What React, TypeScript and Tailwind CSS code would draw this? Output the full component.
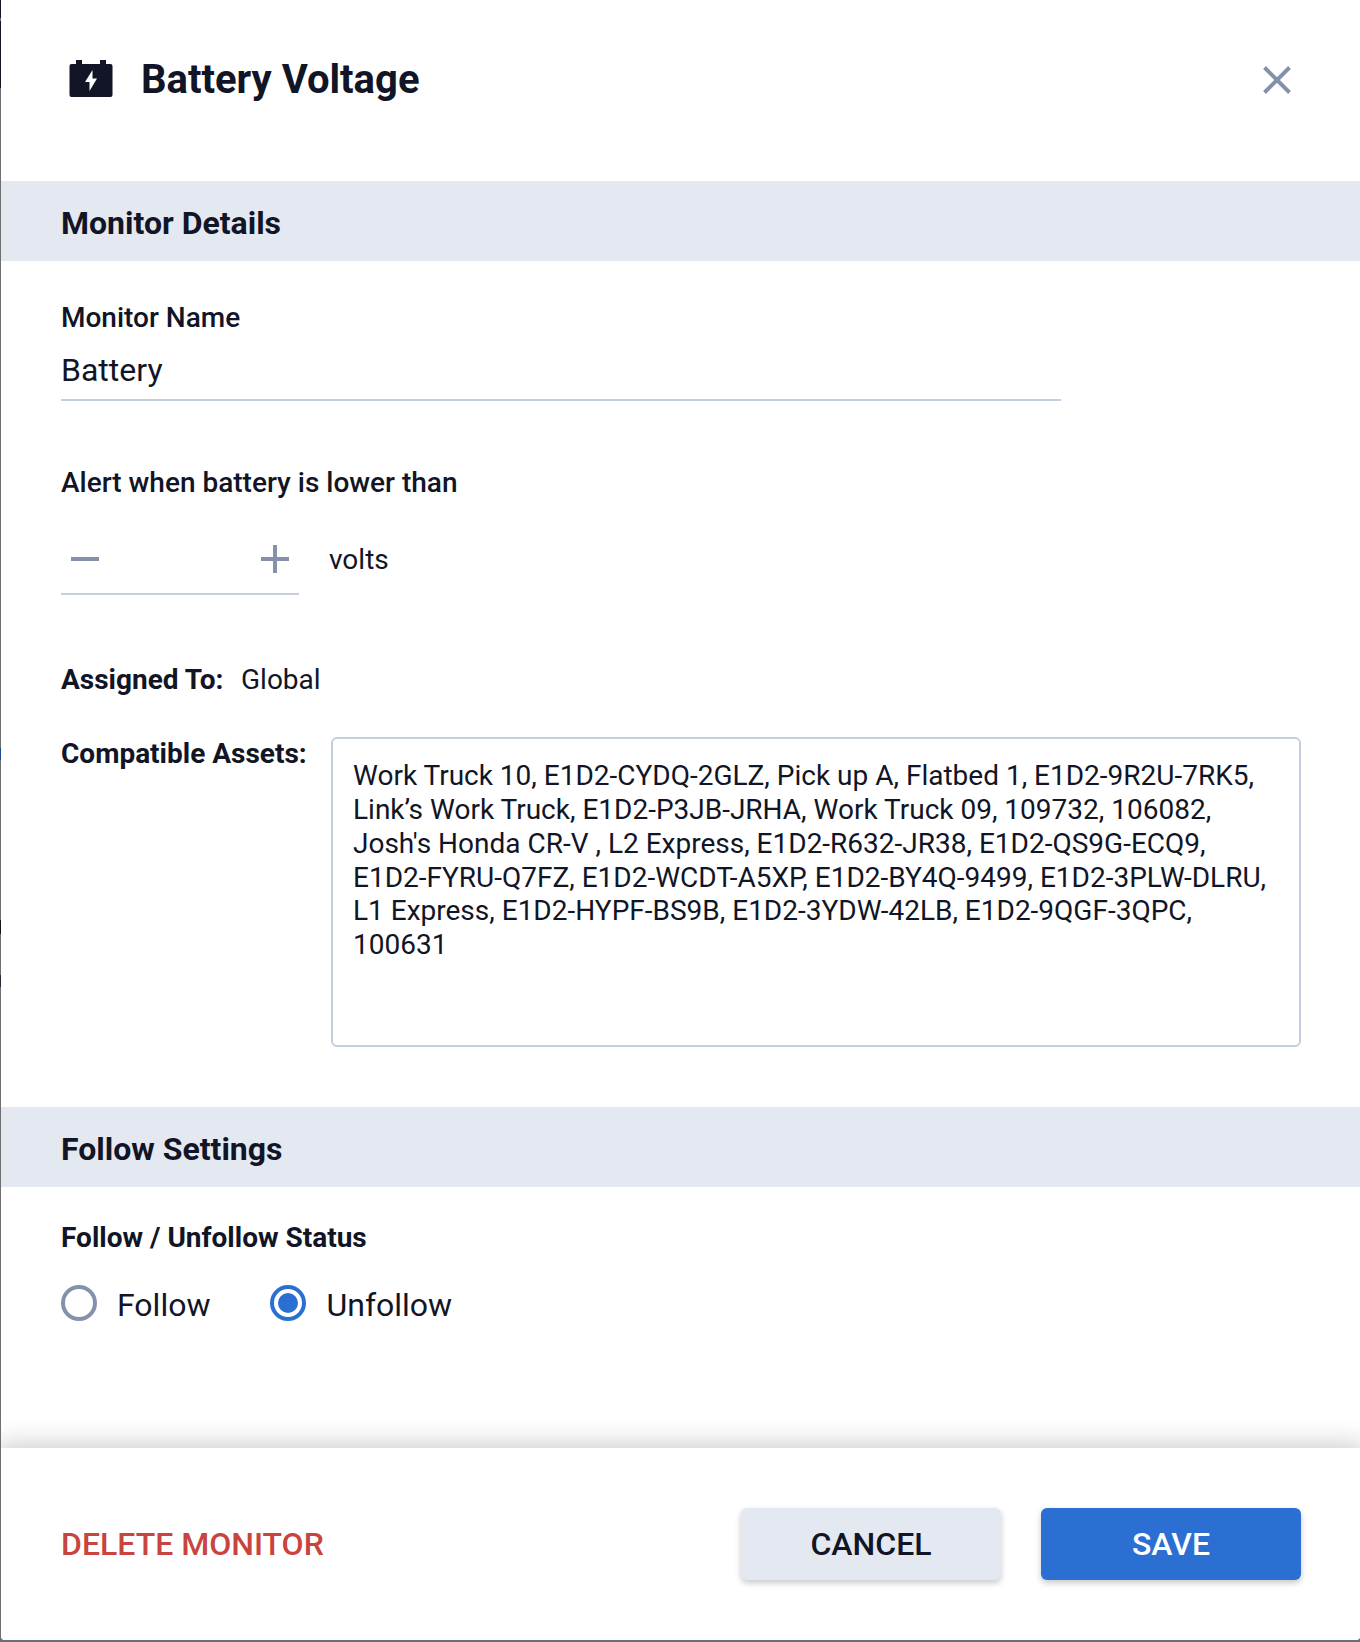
import { useState } from "react";

const assets =
  "Work Truck 10, E1D2-CYDQ-2GLZ, Pick up A, Flatbed 1, E1D2-9R2U-7RK5, Link’s Work Truck, E1D2-P3JB-JRHA, Work Truck 09, 109732, 106082, Josh's Honda CR-V , L2 Express, E1D2-R632-JR38, E1D2-QS9G-ECQ9, E1D2-FYRU-Q7FZ, E1D2-WCDT-A5XP, E1D2-BY4Q-9499, E1D2-3PLW-DLRU, L1 Express, E1D2-HYPF-BS9B, E1D2-3YDW-42LB, E1D2-9QGF-3QPC, 100631";

function BatteryIcon() {
  return (
    <svg width="44" height="38" viewBox="0 0 44 38" fill="none">
      <path
        d="M7 0h6v4h18V0h6v4h4.500a2 2 0 0 1 2 2v29a2 2 0 0 1-2 2h-39a2 2 0 0 1-2-2V6a2 2 0 0 1 2-2H7z"
        fill="#111526"
      />
      <path d="M23.500 10L16 22h4.500v9L28 18.500h-4.500z" fill="#fff" />
    </svg>
  );
}

function SectionTitle({ children }: { children: string }) {
  return (
    <div className="h-20 shrink-0 bg-[#e4e8f1] pl-15 pt-[22px]">
      <h2 className="text-[32px] leading-10 font-bold">{children}</h2>
    </div>
  );
}

interface RadioProps {
  label: string;
  checked: boolean;
  onSelect: () => void;
}

function Radio({ label, checked, onSelect }: RadioProps) {
  return (
    <button role="radio" aria-checked={checked} onClick={onSelect} className="flex items-start gap-5">
      <span
        className={
          checked
            ? "flex size-9 items-center justify-center rounded-full border-4 border-[#2c6fd2]"
            : "flex size-9 items-center justify-center rounded-full border-4 border-[#8591ab]"
        }
      >
        {checked && <span className="size-5 rounded-full bg-[#2c6fd2]" />}
      </span>
      <span className="text-[32px] leading-10">{label}</span>
    </button>
  );
}

// Sliver of the dimmed page behind the drawer
function Backdrop() {
  return (
    <div className="w-px shrink-0">
      <div className="h-[18px] bg-[#111526]" />
      <div className="h-[3px] bg-[#6f6e70]" />
      <div className="h-[67px] bg-[#111526]" />
      <div className="mt-[660px] h-3 bg-[#1d4c94]" />
      <div className="mt-[160px] h-3.5 bg-[#16141c]" />
      <div className="mt-[41px] h-3 bg-[#2c2a34]" />
    </div>
  );
}

export default function App() {
  const [name, setName] = useState("Battery");
  const [volts, setVolts] = useState<number | null>(null);
  const [following, setFollowing] = useState(false);

  return (
    <div className="flex h-[1642px] w-[1360px] overflow-hidden bg-[#6f6e70] pb-0.5 font-['Roboto',sans-serif] text-[#111526]">
      <Backdrop />
      <div className="flex h-[1640px] grow flex-col overflow-hidden rounded-b-[4px] bg-white">
        <header className="flex h-[181px] shrink-0 items-start justify-between pt-[55px] pr-[69px] pl-[68px]">
          <div className="flex items-start">
            <div className="mt-[5px] w-[72px]">
              <BatteryIcon />
            </div>
            <h1 className="mt-px text-[40px] leading-12 font-bold">Battery Voltage</h1>
          </div>
          <button aria-label="Close" className="mt-[11px]">
            <svg width="28" height="28" viewBox="0 0 28 28" stroke="#8591ab" strokeWidth="4">
              <path d="M1.500 1.500l25 25M26.500 1.500l-25 25" />
            </svg>
          </button>
        </header>

        <SectionTitle>Monitor Details</SectionTitle>
        <section className="h-[846px] shrink-0 px-15 pt-[41px]">
          <label className="block text-[28px] leading-8 font-medium">Monitor Name</label>
          <input
            value={name}
            onChange={(e) => setName(e.target.value)}
            className="mt-4 block h-[51px] w-[1000px] border-b-2 border-[#c5cde0] pb-[9px] text-[32px] leading-10 outline-none"
          />

          <label className="mt-[66px] block text-[28px] leading-8 font-medium">
            Alert when battery is lower than
          </label>
          <div className="mt-[22px] flex items-start">
            <div className="flex h-[74px] w-[238px] items-start justify-between border-b-2 border-[#c5cde0] px-2.5 pt-6">
              <button aria-label="Decrease" onClick={() => setVolts((volts ?? 12) - 1)}>
                <svg width="28" height="28" viewBox="0 0 28 28" fill="#8591ab">
                  <path d="M0 12h28v4H0z" />
                </svg>
              </button>
              <span className="text-[28px] leading-8">{volts}</span>
              <button aria-label="Increase" onClick={() => setVolts((volts ?? 12) + 1)}>
                <svg width="28" height="28" viewBox="0 0 28 28" fill="#8591ab">
                  <path d="M0 12h12V0h4v12h12v4H16v12h-4V16H0z" />
                </svg>
              </button>
            </div>
            <span className="mt-[23px] ml-[30px] text-[28px] leading-8">volts</span>
          </div>

          <div className="mt-[69px] flex text-[28px] leading-8">
            <span className="w-[180px] font-bold">Assigned To:</span>
            <span>Global</span>
          </div>

          <div className="mt-[41px] flex items-start">
            <span className="mt-px w-[270px] shrink-0 text-[28px] leading-8 font-bold">
              Compatible Assets:
            </span>
            <div className="h-[310px] w-[970px] shrink-0 rounded-md border-2 border-[#c5cde0] px-5 pt-[20.2px] text-[28px] leading-[33.8px]">
              {assets}
            </div>
          </div>
        </section>

        <SectionTitle>Follow Settings</SectionTitle>
        <section className="grow px-15 pt-[35px]">
          <h3 className="text-[28px] leading-8 font-bold">Follow / Unfollow Status</h3>
          <div role="radiogroup" className="mt-[31px] flex gap-15">
            <Radio label="Follow" checked={following} onSelect={() => setFollowing(true)} />
            <Radio label="Unfollow" checked={!following} onSelect={() => setFollowing(false)} />
          </div>
        </section>

        <footer className="flex h-48 shrink-0 items-start bg-white pt-15 pr-[59px] pl-15 text-[32px] leading-10 font-medium shadow-[0_0_24px_4px_rgba(17,21,38,0.22)]">
          <button className="mt-4 mr-auto text-[#c9443e]">DELETE MONITOR</button>
          <button className="mr-10 h-18 w-[260px] rounded-md bg-[#e4e8f1] shadow-[0_3px_6px_rgba(0,0,0,0.22)]">
            CANCEL
          </button>
          <button className="h-18 w-[260px] rounded-md bg-[#2c6fd2] text-white shadow-[0_3px_6px_rgba(0,0,0,0.22)]">
            SAVE
          </button>
        </footer>
      </div>
    </div>
  );
}
